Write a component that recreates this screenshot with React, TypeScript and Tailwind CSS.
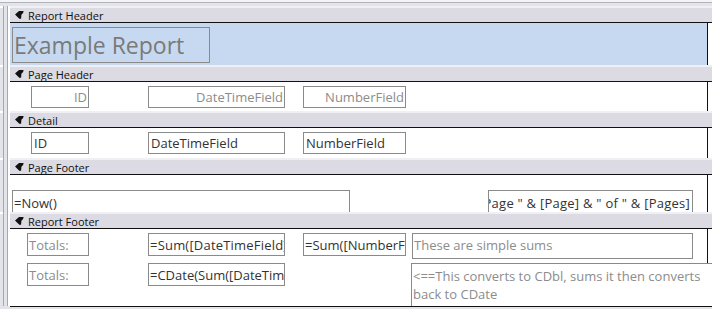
import type { ReactNode } from "react";

function SectionIcon() {
  return (
    <svg width="9" height="8" viewBox="0 0 9 8" className="shrink-0">
      <path d="M0 3.6 L4 0 L8.6 0 L8.1 2.1 L6.4 3.7 L6.1 7.8 L4.3 7.8 Z" fill="#111" />
    </svg>
  );
}

function Ruler({ bar }: { bar?: boolean }) {
  return (
    <div className="flex w-[10px] shrink-0 self-stretch">
      <div className={`w-[3px] bg-[#e3e3ea] ${bar ? "border-t-2 border-white" : ""}`} />
      <div className="w-px bg-[#a7a7af]" />
      <div className="w-[3px] bg-[#e3e3ea]" />
      <div className="w-px bg-[#a7a7af]" />
      <div className="w-[2px] bg-white" />
    </div>
  );
}

function SectionBar({ title }: { title: string }) {
  return (
    <div className="flex h-[17px]">
      <Ruler bar />
      <div className="flex flex-1 items-center gap-[4px] border-t-2 border-b border-t-[#f0f0f4] border-b-[#111] bg-[#dcdbe4] pl-[5px]">
        <SectionIcon />
        <span className="text-[11px] leading-none text-[#111]">{title}</span>
      </div>
    </div>
  );
}

// one section's design surface: controls sit on it at their designer coordinates
function Body({ height, blue, children }: { height: string; blue?: boolean; children?: ReactNode }) {
  return (
    <div className={`flex ${height}`}>
      <Ruler />
      <div className="relative flex flex-1 overflow-hidden bg-white">
        <div className={`w-[698px] border-r border-[#111] ${blue ? "bg-[#c6d9f0]" : "bg-white"}`} />
        {children}
      </div>
    </div>
  );
}

const box = "absolute overflow-hidden whitespace-nowrap border border-[#8a8a8a] text-[13px] leading-[16px]";

export default function App() {
  return (
    <div className="h-[309px] w-[712px] overflow-hidden bg-[#e3e3ea] font-['Open_Sans',sans-serif]">
      {/* top ruler */}
      <div className="flex h-[6px] flex-col">
        <div className="h-[2px] bg-[#f4f4f7]" />
        <div className="h-px bg-[#b3b3bb]" />
        <div className="h-[3px] bg-[#e3e3ea]" />
      </div>

      <SectionBar title="Report Header" />
      <Body height="h-[42px]" blue>
        <div className="absolute left-[2px] top-[4px] flex h-[36px] w-[198px] items-center border border-[#8a8a8a] pl-[1px] text-[23px] leading-none text-[#7a7a7a]">
          Example Report
        </div>
      </Body>

      <SectionBar title="Page Header" />
      <Body height="h-[29px]">
        <div className={`${box} left-[21px] top-[4px] flex h-[22px] w-[58px] items-center justify-end pr-[1px] text-[#8c8c8c]`}>ID</div>
        <div className={`${box} left-[138px] top-[4px] flex h-[22px] w-[137px] items-center justify-end pr-[1px] text-[#8c8c8c]`}>DateTimeField</div>
        <div className={`${box} left-[293px] top-[4px] flex h-[22px] w-[103px] items-center justify-end pr-[1px] text-[#8c8c8c]`}>NumberField</div>
      </Body>

      <SectionBar title="Detail" />
      <Body height="h-[30px]">
        <div className={`${box} left-[21px] top-[4px] flex h-[22px] w-[58px] items-center pl-[2px] text-[#333]`}>ID</div>
        <div className={`${box} left-[138px] top-[4px] flex h-[22px] w-[137px] items-center pl-[2px] text-[#333]`}>DateTimeField</div>
        <div className={`${box} left-[293px] top-[4px] flex h-[22px] w-[103px] items-center pl-[2px] text-[#333]`}>NumberField</div>
      </Body>

      <SectionBar title="Page Footer" />
      <Body height="h-[37px]">
        <div className={`${box} left-[2px] top-[15px] h-[26px] w-[338px] pl-[1px] pt-[4px] text-[#333]`}>=Now()</div>
        <div className={`${box} left-[478px] top-[15px] flex h-[26px] w-[205px] justify-end pr-[2px] pt-[4px] tracking-[0.25px] text-[#333]`}>
          ="Page " &amp; [Page] &amp; " of " &amp; [Pages]
        </div>
      </Body>

      <SectionBar title="Report Footer" />
      <Body height="h-[77px]">
        <div className={`${box} left-[17px] top-[4px] h-[23px] w-[62px] pl-[1px] pt-[3px] text-[#8c8c8c]`}>Totals:</div>
        <div className={`${box} left-[17px] top-[34px] h-[23px] w-[62px] pl-[1px] pt-[3px] text-[#8c8c8c]`}>Totals:</div>
        <div className={`${box} left-[138px] top-[4px] h-[23px] w-[137px] pl-[1px] pt-[3px] tracking-[0.2px] text-[#333]`}>=Sum([DateTimeField])</div>
        <div className={`${box} left-[138px] top-[34px] h-[23px] w-[137px] pl-[1px] pt-[3px] text-[#333]`}>=CDate(Sum([DateTimeField]))</div>
        <div className={`${box} left-[293px] top-[4px] h-[23px] w-[103px] pl-[1px] pt-[3px] text-[#333]`}>=Sum([NumberField])</div>
        <div className={`${box} left-[402px] top-[4px] h-[26px] w-[281px] pl-[1px] pt-[3px] text-[#8c8c8c]`}>These are simple sums</div>
        <div className="absolute left-[401px] top-[34px] h-[44px] w-[310px] whitespace-normal border border-[#8a8a8a] bg-white pl-[1px] pt-[3px] text-[13px] leading-[18px] text-[#8c8c8c]">
          &lt;==This converts to CDbl, sums it then converts back to CDate
        </div>
      </Body>
      <div className="ml-[10px] h-px bg-[#111]" />
    </div>
  );
}
